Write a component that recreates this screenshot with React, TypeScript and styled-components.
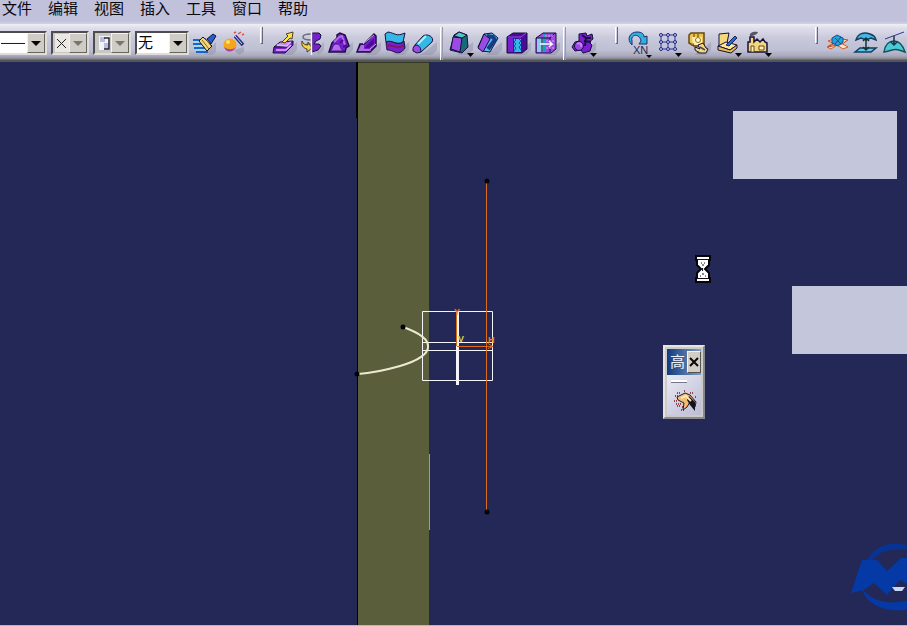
import React from 'react';
import styled, { createGlobalStyle, css } from 'styled-components';

const GlobalStyle = createGlobalStyle`
  * { box-sizing: border-box; }
  html, body { margin: 0; height: 100%; overflow: hidden; }
  #root { height: 100%; }
  body, button, select {
    font-family: "Liberation Sans", "Noto Sans CJK SC", sans-serif;
    font-size: 15px;
    color: #08080c;
  }
`;

const Frame = styled.div`
  display: flex;
  flex-direction: column;
  height: 100vh;
  overflow: hidden;
`;

const MenuBar = styled.nav`
  display: flex;
  flex: none;
  gap: 16px;
  height: 24px;
  padding-left: 2px;
  background: linear-gradient(#c1c1dc 0 21px, #d3d3e5);
`;

const MenuItem = styled.button`
  flex: none;
  height: 18px;
  padding: 0;
  border: 0;
  background: none;
  line-height: 18px;
  white-space: nowrap;
`;

const Toolbar = styled.div`
  display: flex;
  flex: none;
  align-items: flex-start;
  height: 38px;
  padding-top: 6px;
  background: linear-gradient(#eeeef4 0, #dcdce8 5px, #c9c9dc 14px, #bfbfd5 26px, #a9a9bc 32px, #85858f 35px, #55565a 36px 100%);
  overflow: hidden;
`;

const Selectors = styled.div`
  display: flex;
  flex: none;
  gap: 4px;
  padding-top: 1px;
`;

const SelectBox = styled.label<{ $width: number; $muted?: boolean }>`
  position: relative;
  display: flex;
  flex: none;
  width: ${(p) => p.$width}px;
  height: 24px;
  border: 2px solid;
  border-color: #4d4d50 #deddd9 #deddd9 #4d4d50;
  background: ${(p) => (p.$muted ? '#c9c7c1' : '#ffffff')};

  &:first-child { border-left: 0; }
`;

const NativeSelect = styled.select`
  position: absolute;
  inset: 0;
  width: 100%;
  padding: 0 1px;
  border: 0;
  appearance: none;
  background: transparent;
  line-height: 18px;
`;

const Sample = styled.svg`
  flex: 1;
  min-width: 0;
  height: 20px;
`;

const Arrow = styled.span<{ $muted?: boolean }>`
  display: flex;
  align-items: center;
  justify-content: center;
  width: 18px;
  flex: none;
  margin-left: auto;
  border: 1px solid;
  border-color: #f4f2ee #66645f #66645f #f4f2ee;
  background: #cfccc5;

  &::after {
    content: "";
    border: 5px solid transparent;
    border-top: 5px solid ${(p) => (p.$muted ? '#77776f' : '#050505')};
    border-bottom: 0;
  }
`;

const Tools = styled.div<{ $before?: number; $gap?: number }>`
  display: flex;
  flex: none;
  gap: ${(p) => p.$gap ?? 0}px;
  margin-left: ${(p) => p.$before ?? 0}px;
`;

const ToolButton = styled.button`
  flex: none;
  width: 28px;
  height: 28px;
  padding: 0;
  border: 0;
  background: none;

  svg { display: block; width: 28px; height: 28px; }
`;

const bar = css`
  flex: none;
  width: 3px;
  border-left: 1px solid #ffffff;
  border-right: 1px solid #9a9aae;
`;

const Grip = styled.span<{ $before: number; $after: number }>`
  ${bar}
  height: 17px;
  margin: -3px ${(p) => p.$after}px 0 ${(p) => p.$before}px;
  border-right-color: #66667a;
  border-bottom: 1px solid #66667a;
`;

const Divider = styled.span<{ $before: number; $after: number }>`
  ${bar}
  height: 33px;
  margin: -3px ${(p) => p.$after}px 0 ${(p) => p.$before}px;
`;

const Viewport = styled.main`
  position: relative;
  flex: 1;
  min-height: 0;
  background: #242857;
  border-bottom: 1px solid #b4b6c2;
  overflow: hidden;
`;

const Scene = styled.svg`
  display: block;
  width: 100%;
  height: 100%;
`;

const BlankPanel = styled.div<{ $left: number; $top: number }>`
  position: absolute;
  left: ${(p) => p.$left}px;
  top: ${(p) => p.$top}px;
  width: 164px;
  height: 68px;
  background: #c4c6dc;
`;

const Floating = styled.svg<{ $left: number; $top: number }>`
  position: absolute;
  left: ${(p) => p.$left}px;
  top: ${(p) => p.$top}px;
`;

const Palette = styled.section`
  position: absolute;
  left: 663px;
  top: 283px;
  width: 42px;
  padding: 2px;
  border: 2px solid;
  border-color: #e6e4df #88898f #88898f #e6e4df;
  background: #cdcbc8;
`;

const PaletteTitle = styled.header`
  display: flex;
  align-items: center;
  justify-content: space-between;
  height: 26px;
  padding-left: 3px;
  background: linear-gradient(90deg, #123a7c, #7f9dc8);
  color: #eef4ff;
  line-height: 20px;
`;

const Close = styled.button`
  width: 14px;
  height: 22px;
  padding: 0;
  border: 1px solid;
  border-color: #f7f5ef #55534e #55534e #f7f5ef;
  background: #d2cec6;

  svg { display: block; margin: auto; }
`;

const PaletteBody = styled.div`
  display: flex;
  flex-direction: column;
  align-items: flex-start;
  height: 40px;
  padding: 5px 0 0 4px;
  background: linear-gradient(135deg, #e9e9f4, #bcbcd6);
`;

const PaletteGrip = styled.span`
  width: 16px;
  height: 3px;
  flex: none;
  margin-bottom: 4px;
  border-top: 2px solid #ffffff;
  border-bottom: 1px solid #77778a;
`;

const purple = '#7a1fd0';
const violet = '#9a4be6';
const deep = '#4a0c96';
const cyan = '#35b8e6';
const ink = '#16103c';
const sand = '#f4d77c';

const Shadow = ({ d = 'M10 24L25 12V20L20 25H8Z' }: { d?: string }) => (
  <path d={d} fill="#8d8da6" opacity=".45" />
);
const Flyout = () => <path d="M19 23h7l-3.5 4Z" fill="#050505" />;

const art: Record<string, React.ReactNode> = {
  'Copy format': (
    <>
      <Shadow d="M12 24L24 12v10l-4 3Z" />
      <path d="M1 10h11M1 14h10M2 18h11M4 22h12" stroke="#1168c8" strokeWidth="2" />
      <path d="M2 12h9M2 16h9M4 20h9" stroke="#9fe4f6" />
      <path d="m11 7 9 9-5 5-8-10Z" fill={sand} stroke={ink} />
      <path d="m13 8 6 8M10 10l7 9" stroke="#8b6914" />
      <path d="m15 9 6-5 3 2-5 8Z" fill="#235ed0" stroke={ink} />
    </>
  ),
  'Apply material': (
    <>
      <path d="m14 20 10-3v5l-5 3Z" fill="#8d8da6" opacity=".5" />
      <circle cx="10" cy="15" r="6.500" fill="#f4a61c" />
      <path d="M4 17c2 6 9 6 12 0-3 3-8 3-12 0Z" fill="#a946b0" />
      <circle cx="8" cy="12" r="2" fill="#ffe064" />
      <path d="m15 6 8 9" stroke="#282c7c" strokeWidth="3.500" />
      <path d="m15 6 7 8" stroke="#d4d8f3" />
      <path d="m14 3 2-1m2 2 3-2m1 3 2-1" stroke="#df4d4b" strokeWidth="1.5" />
    </>
  ),
  Extrude: (
    <>
      <Shadow />
      <path d="m2 17 6-5 13-1-5 6Z" fill="#c58bf2" stroke={ink} />
      <path d="m2 17-1 6h12l8-8v-4l-6 6Z" fill={purple} stroke={ink} />
      <path d="m5 15 10 1 4-4M4 20h10l5-5" stroke="#e2bcff" strokeWidth="1.500" />
      <path d="m10 12 6-6-2-2 7-2-1 7-2-1-5 5Z" fill="#ffe24b" stroke="#4c3e20" />
    </>
  ),
  Revolve: (
    <>
      <path d="m15 20 9-8v8l-5 5Z" fill="#8d8da6" opacity=".4" />
      <path d="M12 3h7l2 2-1 4-4 2-2 3h5l2 2-3 4-6 2Z" fill={purple} stroke={ink} />
      <path d="M11 4C6 4 3 5 3 7s4 3 8 3M11 14c-4 0-7 1-7 2" fill="none" stroke="#6d6d80" strokeWidth="1.500" />
      <path d="M2 11c1 3 3 4 6 4v-3l4 6-5 4v-3c-4-1-6-4-5-8Z" fill="#f4d63f" stroke="#4c3e20" />
      <path d="M11.500 1v24" stroke="#f5efff" strokeWidth="1.500" />
    </>
  ),
  Sweep: (
    <>
      <Shadow />
      <path d="m1 22 3-9 5-5V5l3-2 5 2 4 11-3 2-1 4Z" fill={purple} stroke={ink} strokeWidth="1.500" />
      <path d="M2 21c3-1 2-6 5-7h3c3 1 2 6 6 7Z" fill="#b36ceb" stroke={deep} />
      <path d="m6 12 5-5 3-1 3 9" stroke="#b36ceb" strokeWidth="2" fill="none" />
      <path d="m12 13 3-3M15 17l4-2" stroke={deep} strokeWidth="2" />
    </>
  ),
  'Multi-section': (
    <>
      <Shadow />
      <path d="m1 22 3-8h4L18 4l2 2v10l-6 6Z" fill={purple} stroke={ink} strokeWidth="1.500" />
      <path d="m2 21 3-6h3v4h6l1 2Z" fill="#b16be8" />
      <path d="m9 17 9-9v6l-5 4H9Z" fill={deep} />
      <path d="M7 14 18 5M14 19l6-5" stroke="#d2a0f4" />
    </>
  ),
  Offset: (
    <>
      <Shadow />
      <path d="M2 12c7-4 11 6 18-1l1 7c-7 10-12 1-18 2Z" fill={purple} stroke={ink} />
      <path d="m1 4 3-2c7 1 8 5 17 1l-2 9C12 16 8 9 2 12Z" fill={cyan} stroke={ink} />
      <path d="M2 16c7-3 11 5 18-1" fill="none" stroke="#7c1763" strokeWidth="2" />
    </>
  ),
  Cylinder: (
    <>
      <Shadow />
      <path d="m2 16 9-10c4-3 12 1 9 6L9 22Z" fill={cyan} stroke={ink} />
      <path d="M1 21c-1-8 8-8 8 1l-4 1Z" fill={violet} stroke={ink} />
      <path d="m6 14 8-8" stroke="#a9f2fa" strokeWidth="2" />
    </>
  ),
  Draft: (
    <>
      <Shadow />
      <path d="m6 5 5-3 8 3 1 12-6 6-12-3Z" fill="#176b78" stroke={ink} />
      <path d="m5 7 9 1-2 14-9-3Z" fill={violet} stroke={ink} />
      <path d="m6 6 5-4 8 3-5 3Z" fill="#4ccbc5" stroke={ink} />
      <Flyout />
    </>
  ),
  'Thick surface': (
    <>
      <Shadow />
      <path d="m7 4 8-1 6 5-8 14-8-1-4-4Z" fill="#54b8e8" stroke={ink} />
      <path d="m10 6 6 1 2 3-7 9" fill="none" stroke="#173c86" strokeWidth="4" />
      <path d="m7 4 6 5-7 13-5-4Z" fill={violet} stroke={ink} />
    </>
  ),
  Split: (
    <>
      <Shadow />
      <path d="m1 7 6-4h14v16l-5 4H1Z" fill={deep} stroke={ink} />
      <path d="M2 8h5v14H2Z" fill={purple} />
      <path d="M8 9h7v13H8Z" fill={cyan} />
      <path d="m8 8 2 2-2 2 2 2-2 2 2 2-2 3m7-14-2 2 2 2-2 2 2 2-2 2 2 3" fill="none" stroke="#174fae" />
      <path d="M2 7h13l5-4" stroke={violet} />
    </>
  ),
  'Close surface': (
    <>
      <Shadow />
      <path d="m1 8 7-5h13v16l-5 4H1Z" fill={violet} stroke={ink} />
      <path d="M2 8h6v14H2Z" fill="#87cfe7" />
      <path d="M8 4h3v18H8Z" fill="#159fc2" />
      <path d="M1 8h14l5-5M7 8v14M15 8v14" fill="none" stroke={ink} />
      <path d="M10 6h9M11 11h9M11 18h9" stroke="#e9a5e2" strokeDasharray="2 1" />
      <path d="M5 14h12l-3-3m3 3-3 3" fill="none" stroke="#fff" strokeWidth="1.500" />
    </>
  ),
  'Boolean assembly': (
    <>
      <Shadow />
      <path d="m8 4 7-1 1 3 5-2 1 5-4 3 3 3-2 6-7 2-2-3-6 1-3-4 3-5 4-1Z" fill={purple} stroke={ink} />
      <circle cx="8" cy="16" r="4.500" fill={violet} stroke={ink} />
      <path d="m11 5 4 3h5M13 11l7 1m-5-4-1 8" stroke={ink} strokeWidth="2" />
      <path d="M6 14c3-2 5 0 4 3" stroke="#c581f7" fill="none" strokeWidth="2" />
      <Flyout />
    </>
  ),
  'Repeat object': (
    <>
      <path d="M6 15C0 9 4 2 11 2c5 0 7 2 7 5l3-1v8h-8l2-3c-1-8-11-7-9 0Z" fill="#35aee0" stroke="#16336a" />
      <text x="7" y="24" fontFamily="Liberation Sans" fontSize="11" fill="#28284f">XN</text>
      <path d="M20 25h6l-3 3Z" fill="#050505" />
    </>
  ),
  'Work grid': (
    <>
      <path d="M3 5h18M3 12h18M3 19h18M5 3v18M12 3v18M19 3v18" stroke="#28329b" />
      {[5, 12, 19].flatMap((y) => [5, 12, 19].map((x) => <circle key={`${x}-${y}`} cx={x} cy={y} r="1.500" fill="#c6c8ed" stroke="#222a85" />))}
      <Flyout />
    </>
  ),
  'Update part': (
    <>
      <Shadow />
      <path d="M3 5 5 3h13v13H8l-5-3Z" fill="#edc452" stroke="#614914" strokeWidth="1.500" />
      <path d="M6 7h10v8H7Z" fill="#ffedae" />
      <path d="M8 3v4m4-4v4M8 14l-3 1" stroke="#8c6516" strokeWidth="1.500" />
      <circle cx="12" cy="10" r="2.500" fill="#fff9d8" stroke="#9c721d" />
      <path d="m12 15 5-2 3 5 2 1-2 4h-6l-5-3v-3l5 2Z" fill={sand} stroke={ink} />
      <path d="m14 17 5 3M11 22l3 1" stroke="#4b4b4e" strokeWidth="1.500" />
    </>
  ),
  'Open catalog': (
    <>
      <path d="m3 4 10-1-2 10-8 3Z" fill={sand} stroke={ink} />
      <path d="m2 16 8-4 11 3-7 5Z" fill="#ffe796" stroke={ink} />
      <path d="m2 16 12 4 7-5v3l-6 5-13-3Z" fill="#e4bd4d" stroke={ink} />
      <path d="m10 15 9-9 2 2-8 8Z" fill="#236ad7" stroke="#19265a" />
      <Flyout />
    </>
  ),
  'Feature factory': (
    <>
      <path d="M2 22V12h2V7h4v5l3-3 3 3 3-3 2 3 2 1v9Z" fill={sand} stroke={ink} strokeWidth="1.500" />
      <path d="M5 16h3v6H5Zm8 0h5v4h-5Z" fill="#fff3b7" stroke="#674b18" />
      <path d="M4 6c-1-3 3-5 8-4-1 3-4 3-6 4" fill="#555565" />
      <Flyout />
    </>
  ),
  'Connect checker': (
    <>
      <path d="m3 11 6-2 14 8-5 2-6-4-6 4-4-2 6-4Z" fill="#ffe1c2" stroke="#d45d25" />
      <path d="m3 17 14-8 6 1-6 4Z" fill="#ffd2ab" stroke="#b64d2f" />
      <path d="m7 8 5-3 6 3v4l-5 4-6-3Z" fill="#25a2d4" stroke="#174c98" />
      <path d="m10 8 6 6M16 7l-6 7" stroke="#174c98" />
    </>
  ),
  'Distance analysis': (
    <>
      <path d="M3 10c2-7 8-8 14-6 5 2 5 3 6 6l-5-2-5 2-5-2Z" fill="#45b6e5" stroke="#153c61" strokeWidth="1.500" />
      <path d="m2 22 5-4h16l-5 4Z" fill="#5cc9df" stroke="#153c61" strokeWidth="1.500" />
      <path d="M13 8v12m-3-9 3-3 3 3m-6 6 3 3 3-3" fill="none" stroke="#123239" strokeWidth="1.500" />
    </>
  ),
  'Curvature analysis': (
    <>
      <path d="M3 22c1-7 5-11 10-11 6 0 9 5 11 11l-6-2c-5-2-8 1-15 2Z" fill="#4acbd8" stroke="#15525e" strokeWidth="1.500" />
      <path d="m4 9 19-7" stroke="#2c359d" />
      <path d="M13 6v9m-3-3 3 3 3-3" fill="none" stroke="#173747" strokeWidth="1.500" />
    </>
  ),
};

const ToolSet = ({ names, before, gap }: { names: string[]; before?: number; gap?: number }) => (
  <Tools $before={before} $gap={gap}>
    {names.map((name) => (
      <ToolButton key={name} aria-label={name}>
        <svg viewBox="0 0 28 28" fill="none">{art[name]}</svg>
      </ToolButton>
    ))}
  </Tools>
);

type DropDownProps = { label: string; width: number; muted?: boolean; value?: string; children?: React.ReactNode };

const DropDown = ({ label, width, muted, value = '', children }: DropDownProps) => (
  <SelectBox $width={width} $muted={muted}>
    {children}
    <Arrow $muted={muted} />
    <NativeSelect aria-label={label} disabled={muted}>
      <option>{value}</option>
    </NativeSelect>
  </SelectBox>
);

const menus = ['文件', '编辑', '视图', '插入', '工具', '窗口', '帮助'];

export default function App() {
  return (
    <>
      <GlobalStyle />
      <Frame>
        <MenuBar>
          {menus.map((name) => <MenuItem key={name}>{name}</MenuItem>)}
        </MenuBar>
        <Toolbar>
          <Selectors>
            <DropDown label="Line type" width={47}>
              <Sample viewBox="0 0 28 20"><path d="M1 10.500h25" stroke="#111" /></Sample>
            </DropDown>
            <DropDown label="Point symbol" width={38} muted>
              <Sample viewBox="0 0 16 20">
                <path d="M2 1h14v18H2Z" fill="#e9e8e4" />
                <path d="m4 6 9 9M13 6l-9 9" stroke="#222" />
              </Sample>
            </DropDown>
            <DropDown label="Rendering style" width={38} muted>
              <Sample viewBox="0 0 16 20">
                <path d="M4 3h11v14H4Z" fill="#f3f3f8" />
                <path d="M5 4h5v5H5Zm4 6h5v6H9Z" fill="#b9bde0" />
                <path d="M9 5h5v11H9" fill="none" stroke="#252535" strokeWidth="1.500" />
              </Sample>
            </DropDown>
            <DropDown label="Layer" width={54} value="无" />
          </Selectors>
          <ToolSet before={3} names={['Copy format', 'Apply material']} />
          <Grip $before={12} $after={9} />
          <ToolSet names={['Extrude', 'Revolve', 'Sweep', 'Multi-section', 'Offset', 'Cylinder']} />
          <Divider $before={0} $after={5} />
          <ToolSet gap={1} names={['Draft', 'Thick surface', 'Split', 'Close surface']} />
          <Divider $before={0} $after={5} />
          <ToolSet names={['Boolean assembly']} />
          <Grip $before={16} $after={8} />
          <ToolSet gap={2} names={['Repeat object', 'Work grid', 'Update part', 'Open catalog', 'Feature factory']} />
          <Grip $before={41} $after={7} />
          <ToolSet names={['Connect checker', 'Distance analysis', 'Curvature analysis']} />
        </Toolbar>
        <Viewport>
          <Scene aria-label="3D model">
            <rect x="358" width="71" height="100%" fill="#5b5e3b" />
            <path d="M358 .5h71" stroke="#343722" />
            <path d="M357 0v56" stroke="#030306" strokeWidth="2" />
            <rect x="357" y="56" width="1" height="100%" fill="#030306" />
            <path d="M429.500 392v76" stroke="#939d9b" />
            <g fill="none" stroke="#f4f4fa">
              <path d="M422.500 249.500h70v69h-70ZM422.500 280.500h70M422.500 288.500h70" />
              <path d="M457.500 250v73" strokeWidth="3" />
              <path d="M403 265c34 12 34 28-3 39-14 4-27 7-42 8" stroke="#ecebd2" strokeWidth="2" />
            </g>
            <path d="M486.500 118v331M456.500 250v34M457 284.500h36m-5-3 5 3-5 2" fill="none" stroke="#dc6b18" />
            <g fontFamily="Liberation Sans" fontSize="9" fontWeight="bold">
              <text x="454" y="253" fill="#f27b25">Y</text>
              <text x="458" y="280" fill="#d6d34a">V</text>
              <text x="488" y="281" fill="#f27b25">H</text>
            </g>
            <g fill="#030306">
              <circle cx="403" cy="265" r="2.500" />
              <circle cx="357" cy="312" r="2.500" />
              <circle cx="487" cy="119" r="2.500" />
              <circle cx="487" cy="450" r="2.500" />
            </g>
          </Scene>
          <BlankPanel $left={733} $top={49} />
          <BlankPanel $left={792} $top={224} />
          <Floating $left={695} $top={193} width="16" height="28" viewBox="0 0 16 28" aria-label="Busy pointer">
            <path d="M1 1h14v4h-1v5l-4 4 4 4v5h1v4H1v-4h1v-5l4-4-4-4V5H1Z" fill="#fff" stroke="#050509" strokeWidth="2" />
            <path d="M2 4.500h12M2 23.500h12M6 8h1m2 0h1M7 10h2M7.500 13v3M5 21h1m1-2h2m1 2h1" stroke="#101018" />
          </Floating>
          <Palette aria-label="高">
            <PaletteTitle>
              高
              <Close aria-label="Close">
                <svg width="10" height="12" viewBox="0 0 10 12"><path d="m1 2 8 8M9 2l-8 8" stroke="#090909" strokeWidth="2" /></svg>
              </Close>
            </PaletteTitle>
            <PaletteBody>
              <PaletteGrip />
              <ToolButton aria-label="Advanced tools">
                <svg viewBox="0 0 28 28" fill="none">
                  <path d="M6 6h3m4-2h2m4 2h3m2 4h2M3 14h4m-1 5h3m1 4h3m2-4h2M8 11h2m11-5h2m-14 11h2m6-1h1M4 9h3m-2 8h3m3 3h3" stroke="#a03e4d" strokeWidth="2" strokeDasharray="1 1" />
                  <path d="m6 10 8-4 5 2 6 7-1 5-5-5-3 5-4 3 1-7-6-3Z" fill="#f0bd74" stroke="#231b1d" />
                  <path d="m18 9 6 6v9l-5-6-3-5Z" fill="#15131c" />
                  <path d="m10 11 5-2 5 5" stroke="#ffe6b4" strokeWidth="2" />
                </svg>
              </ToolButton>
            </PaletteBody>
          </Palette>
          <Floating $left={850} $top={480} width="76" height="70" viewBox="0 0 76 70" aria-label="Logo">
            <path d="M14 24C21 5 38-2 57 3l-1 5C38 6 28 10 21 20Z" fill="#073494" />
            <path d="M1 51 12 18h15l10 11 14-13h24v30H63L50 38 37 53 24 41l-10 7Z" fill="#0539a5" />
            <path d="M12 47c13 15 32 18 64 6v9C44 76 17 65 12 47Z" fill="#0539a5" />
            <path d="M42 45h13l-3 4h-7Z" fill="#c6d9f2" />
          </Floating>
        </Viewport>
      </Frame>
    </>
  );
}
